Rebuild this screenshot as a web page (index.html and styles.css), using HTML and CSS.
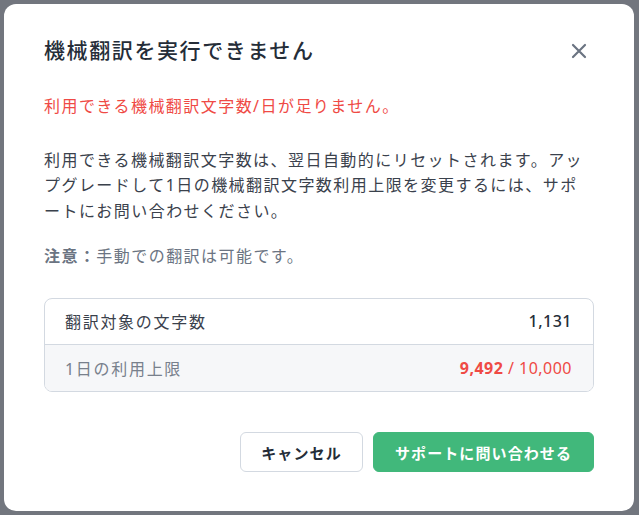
FILE: index.html
```html
<!DOCTYPE html>
<html lang="ja">
<head>
<meta charset="utf-8">
<title>機械翻訳を実行できません</title>
<link rel="stylesheet" href="styles.css">
</head>
<body>
<div class="backdrop">
  <div class="modal" role="dialog" aria-labelledby="modal-title">
    <div class="modal-header">
      <h2 id="modal-title" class="modal-title">機械翻訳を実行できません</h2>
      <button class="close-btn" aria-label="閉じる">
        <svg width="16" height="16" viewBox="0 0 16 16" fill="none" stroke="currentColor" stroke-width="2.2" stroke-linecap="round">
          <path d="M2 2 L14 14 M14 2 L2 14"/>
        </svg>
      </button>
    </div>
    <p class="error-text">利用できる機械翻訳文字数/日が足りません。</p>
    <p class="body-text">利用できる機械翻訳文字数は、翌日自動的にリセットされます。アップグレードして1日の機械翻訳文字数利用上限を変更するには、サポートにお問い合わせください。</p>
    <p class="note-text"><strong>注意：</strong>手動での翻訳は可能です。</p>
    <div class="stats">
      <div class="stats-row">
        <span class="stats-label">翻訳対象の文字数</span>
        <span class="stats-value">1,131</span>
      </div>
      <div class="stats-row stats-row-alt">
        <span class="stats-label stats-label-muted">1日の利用上限</span>
        <span class="stats-value stats-value-danger"><strong>9,492</strong> / 10,000</span>
      </div>
    </div>
    <div class="modal-footer">
      <button class="btn btn-secondary">キャンセル</button>
      <button class="btn btn-primary">サポートに問い合わせる</button>
    </div>
  </div>
</div>
</body>
</html>
```

FILE: styles.css
```css
* {
  box-sizing: border-box;
}

html, body {
  margin: 0;
  padding: 0;
  height: 100%;
}

body {
  font-family: "Noto Sans", "Noto Sans CJK JP", sans-serif;
  background: #72767e;
}

.backdrop {
  width: 639px;
  height: 515px;
  padding: 4px 5px 4px 4px;
}

.modal {
  background: #ffffff;
  border-radius: 12px;
  height: 507px;
  padding: 28px 40px 39px 40px;
  display: flex;
  flex-direction: column;
}

.modal-header {
  display: flex;
  align-items: center;
  justify-content: space-between;
  height: 36px;
}

.modal-title {
  margin: 0;
  font-size: 21px;
  font-weight: 500;
  letter-spacing: 1.6px;
  line-height: 32px;
  color: #252d38;
}

.close-btn {
  width: 32px;
  height: 32px;
  margin-right: -1px;
  margin-top: 1px;
  border: none;
  background: transparent;
  color: #6b7482;
  display: flex;
  align-items: center;
  justify-content: center;
  padding: 0;
  cursor: pointer;
}

.error-text,
.body-text,
.note-text {
  margin: 0;
  font-size: 16px;
  line-height: 25.6px;
  letter-spacing: 1.45px;
}

.error-text {
  margin-top: 26px;
  color: #ef4a45;
}

.body-text {
  margin-top: 28px;
  color: #3a414c;
}

.note-text {
  margin-top: 20px;
  color: #6b7482;
}

.note-text strong {
  font-weight: 700;
}

.stats {
  margin-top: 28px;
  border: 1px solid #d3d9e1;
  border-radius: 8px;
  overflow: hidden;
}

.stats-row {
  display: flex;
  justify-content: space-between;
  align-items: center;
  height: 45px;
  padding: 0 21px 0 20px;
  font-size: 16px;
  letter-spacing: 0.03em;
}

.stats-row-alt {
  border-top: 1px solid #d3d9e1;
  background: #f6f7f9;
  height: 47px;
}

.stats-label {
  color: #3a414c;
  letter-spacing: 1.7px;
}

.stats-label-muted {
  color: #78808c;
}

.stats-value {
  color: #252d38;
  font-weight: 500;
}

.stats-value-danger {
  color: #ef4a45;
  font-weight: 400;
}

.stats-value-danger strong {
  font-weight: 700;
}

.modal-footer {
  margin-top: auto;
  display: flex;
  justify-content: flex-end;
  gap: 10px;
}

.btn {
  height: 40px;
  border-radius: 6px;
  font-family: "Noto Sans", "Noto Sans CJK JP", sans-serif;
  font-size: 15px;
  font-weight: 700;
  letter-spacing: 1.1px;
  padding: 0 16px;
  cursor: pointer;
}

.btn-secondary {
  width: 123px;
  background: #ffffff;
  border: 1px solid #d3d9e1;
  color: #252d38;
}

.btn-primary {
  width: 221px;
  background: #41b87b;
  border: 1px solid #41b87b;
  color: #ffffff;
}
```
